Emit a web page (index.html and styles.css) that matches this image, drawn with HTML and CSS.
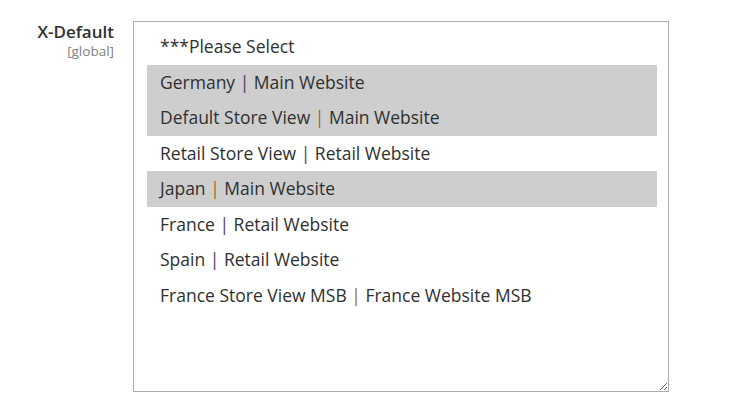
FILE: index.html
```html
<!DOCTYPE html>
<html>
<head>
<meta charset="utf-8">
<link rel="stylesheet" href="styles.css">
</head>
<body>
<div class="field">
  <div class="label">
    <div class="title">X-Default</div>
    <div class="scope">[global]</div>
  </div>
  <div class="multiselect">
    <div class="opt">***Please Select</div>
    <div class="opt sel">Germany <span class="p1">|</span> Main Website</div>
    <div class="opt sel">Default Store View <span class="p2">|</span> Main Website</div>
    <div class="opt">Retail Store View <span class="p1">|</span> Retail Website</div>
    <div class="opt sel">Japan <span class="p2">|</span> Main Website</div>
    <div class="opt">France <span class="p1">|</span> Retail Website</div>
    <div class="opt">Spain <span class="p1">|</span> Retail Website</div>
    <div class="opt">France Store View MSB <span class="p2">|</span> France Website MSB</div>
  </div>
</div>
</body>
</html>
```

FILE: styles.css
```css
html, body {
  margin: 0;
  padding: 0;
  background: #ffffff;
}
body {
  font-family: "Open Sans", "Noto Sans", sans-serif;
  color: #303030;
}
.field {
  display: flex;
  align-items: flex-start;
  gap: 19px;
  padding-top: 21px;
}
.label {
  width: 114px;
  text-align: right;
}
.title {
  font-size: 17px;
  font-weight: 600;
  line-height: 22px;
  color: #303030;
}
.scope {
  font-size: 13.5px;
  line-height: 17px;
  color: #808080;
}
.multiselect {
  box-sizing: border-box;
  width: 536px;
  height: 371px;
  border: 1px solid #adadad;
  padding: 7px 11px 0 13px;
  overflow: auto;
  resize: vertical;
}
.opt {
  font-size: 17.5px;
  line-height: 21.5px;
  padding: 7px 13px;
  white-space: nowrap;
}
.sel {
  background: #cecece;
}
.p1 { color: #4b3a66; }
.p2 { color: #a0681c; }
```
